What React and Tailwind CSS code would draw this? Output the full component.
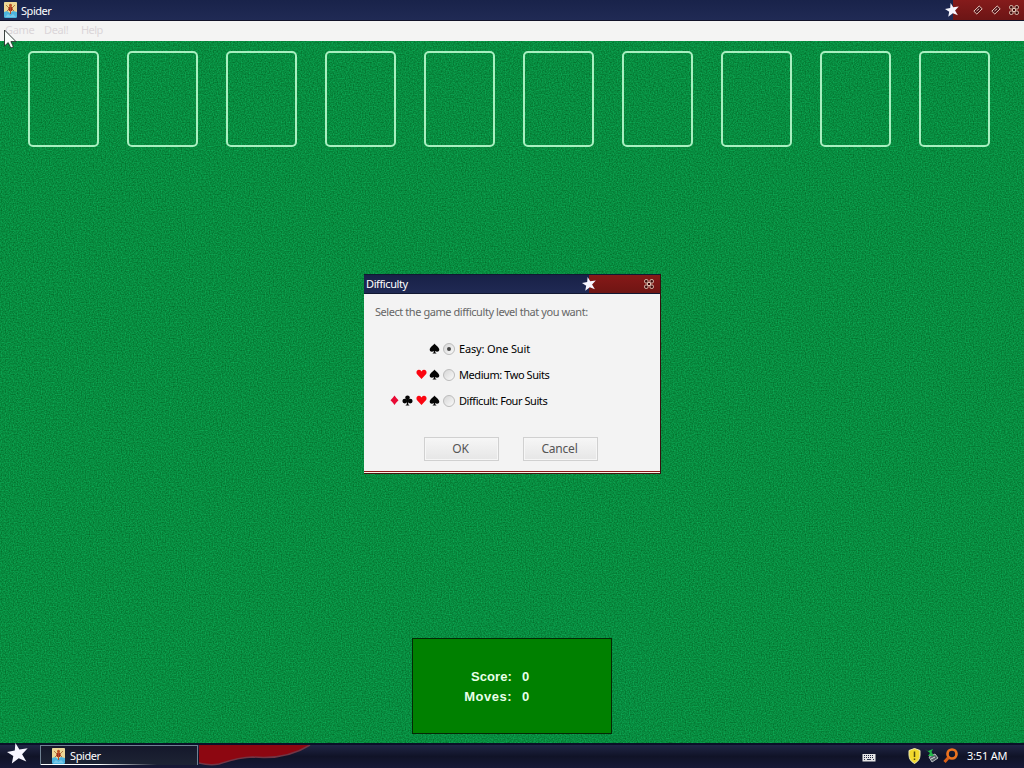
const suitPaths = {
  spade: 'M5.5 .5 C6.3 2.3 10.3 4 10.3 6.8 C10.3 8.7 7.8 9.4 6.2 8 L6.2 9.3 L7.6 10.5 H3.4 L4.8 9.3 L4.8 8 C3.2 9.4 .7 8.7 .7 6.8 C.7 4 4.7 2.3 5.5 .5Z',
  heart: 'M5.5 10 L1.1 5.3 C-.5 3 1.2 .5 3.2 .8 Q4.8 1 5.5 2.4 Q6.2 1 7.8 .8 C9.8 .5 11.5 3 9.9 5.3Z',
  diamond: 'M5.5 .5 Q7.2 3 9.5 5.2 Q7.2 7.4 5.5 10 Q3.8 7.4 1.5 5.2 Q3.8 3 5.5 .5Z',
};

const suitColors = { spade: '#050505', club: '#050505', heart: '#fb0510', diamond: '#e80a35' };

const Suit = ({ name }) => (
  <svg width="11" height="11" viewBox="0 0 11 11" fill={suitColors[name]}>
    {name === 'club' ? (
      <>
        <circle cx="5.5" cy="2.7" r="2.3" />
        <circle cx="2.8" cy="6.1" r="2.4" />
        <circle cx="8.2" cy="6.1" r="2.4" />
        <path d="M4.8 4h1.4v5.3L7.6 10.5H3.4l1.4-1.2Z" />
      </>
    ) : (
      <path d={suitPaths[name]} />
    )}
  </svg>
);

const Star = ({ className }) => (
  <svg viewBox="0 0 20 20" className={className}>
    <path d="M8 0 L11.8 6.2 L19.7 5 L14.4 10.8 L18.4 17.6 L11.2 14.6 L4.6 19.6 L6 12.4 L0 8.6 L7.4 7.2Z" fill="#f7f6ff" />
  </svg>
);

const SpiderIcon = ({ className }) => (
  <svg viewBox="0 0 13 16" className={className}>
    <rect width="13" height="16" rx="1.5" fill="#4cb5df" />
    <path d="M1 0H12Q13 0 13 1V10L9 9 6 11 3 9 0 10V1Q0 0 1 0Z" fill="#edd796" />
    <path d="M1 15L4 12L6.5 14L9 12L12 15Z" fill="#78c9e8" />
    <path d="M2 3L5 6M11 3L8 6M3 9L5 7M10 9L8 7" stroke="#a5602a" fill="none" strokeWidth=".8" />
    <ellipse cx="6.5" cy="3.5" rx="1.5" ry="1.8" fill="#c05318" />
    <ellipse cx="6.5" cy="7" rx="2.2" ry="2.3" fill="#a52b19" />
    <path d="M6.5 2V12" stroke="#b5502c" />
  </svg>
);

const DiamondButton = () => (
  <svg width="10" height="10" viewBox="0 0 10 10" fill="none" stroke="#e8c9bd" strokeWidth="1">
    <path d="M.8 6.2 6.2 1 9.2 3.8 3.8 9Z" fill="#4a0b12" />
    <path d="M3.5 6 6.2 3.7" />
  </svg>
);

const CloseIcon = () => (
  <svg width="10" height="10" viewBox="0 0 10 10" fill="#3a0808" stroke="#efd6c6" strokeWidth=".9">
    <rect x=".6" y=".6" width="3.4" height="3.4" rx="1.2" />
    <rect x="6" y=".6" width="3.4" height="3.4" rx="1.2" />
    <rect x=".6" y="6" width="3.4" height="3.4" rx="1.2" />
    <rect x="6" y="6" width="3.4" height="3.4" rx="1.2" />
    <path d="M5 3 7 5 5 7 3 5Z" />
  </svg>
);

const Felt = () => (
  <svg className="absolute inset-0" width="1024" height="702">
    <defs>
      <filter id="felt" x="0" y="0" width="100%" height="100%" colorInterpolationFilters="sRGB">
        <feTurbulence type="fractalNoise" baseFrequency="0.75" numOctaves="1" seed="8" />
        <feColorMatrix values="0.06 0 0 0 0  0.36 0 0 0 0.37  0.26 0 0 0 0.12  0 0 0 0 1" />
      </filter>
    </defs>
    <rect width="1024" height="702" fill="#058b3d" filter="url(#felt)" />
  </svg>
);

const levels = [
  { label: 'Easy: One Suit', suits: ['spade'], checked: true, spacing: 'tracking-[-0.15px]' },
  { label: 'Medium: Two Suits', suits: ['heart', 'spade'], spacing: 'tracking-[-0.43px]' },
  { label: 'Difficult: Four Suits', suits: ['diamond', 'club', 'heart', 'spade'], spacing: 'tracking-[-0.44px]' },
];

const DifficultyDialog = () => (
  <div className="absolute left-[364px] top-[233px] flex h-[200px] w-[297px] flex-col border-r border-[#35100d] bg-[#f3f3f3]">
    <div className="flex h-5 shrink-0 border-y border-[#111832] bg-linear-to-b from-[#182147] to-[#202a54] text-white">
      <span className="w-[218px] pl-[2px] text-[11px] leading-[18px] tracking-[-0.4px]">Difficulty</span>
      <div className="relative ml-[7px] flex flex-1 items-center justify-end bg-linear-to-b from-[#861918] to-[#6f1513] pl-2 pr-[6px]">
        <Star className="absolute -left-[7px] top-[2px] h-[14px] w-[14px]" />
        <CloseIcon />
      </div>
    </div>
    <p className="mt-[10px] pl-[11px] text-[11px] leading-4 tracking-[-0.44px] text-[#666] whitespace-nowrap">
      Select the game difficulty level that you want:
    </p>
    <div className="mt-[16px] flex flex-col">
      {levels.map((level) => (
        <label key={level.label} className="flex h-[26px] items-center">
          <span className="flex w-[76px] justify-end gap-[2.5px] pb-[2px]">
            {level.suits.map((suit) => <Suit key={suit} name={suit} />)}
          </span>
          <span className="ml-[3px] flex h-3 w-3 items-center justify-center rounded-full border border-[#bcbcbc] bg-linear-to-br from-[#d6d6d6] to-[#fafafa]">
            {level.checked && <span className="h-1 w-1 rounded-full bg-[#444]" />}
          </span>
          <span className={`ml-1 text-[11px] text-black whitespace-nowrap ${level.spacing}`}>{level.label}</span>
        </label>
      ))}
    </div>
    <div className="mt-[23px] flex gap-6 pl-[60px]">
      <button className="h-6 w-[75px] border border-[#d0d0d0] bg-linear-to-b from-[#f6f6f6] to-[#e6e6e6] pr-[2px] text-[12px] tracking-[-0.2px] text-[#555] shadow-[inset_0_0_0_1px_#f6f6f6]">OK</button>
      <button className="h-6 w-[75px] border border-[#d0d0d0] bg-linear-to-b from-[#f6f6f6] to-[#e6e6e6] pr-[2px] text-[12px] tracking-[-0.2px] text-[#555] shadow-[inset_0_0_0_1px_#f6f6f6]">Cancel</button>
    </div>
    <div className="mt-auto flex flex-col">
      <div className="h-px bg-[#8a1918]" />
      <div className="h-px bg-[#f8f0e5]" />
      <div className="h-px bg-[#42150f]" />
    </div>
  </div>
);

const TitleBar = () => (
  <header className="flex h-[21px] border-b border-[#111329] bg-linear-to-b from-[#19234a] to-[#202a54] text-white">
    <div className="flex w-[953px] items-center">
      <SpiderIcon className="mb-px ml-1 h-4 w-[13px]" />
      <span className="ml-1 pt-[2px] text-[11px] tracking-[-0.45px]">Spider</span>
    </div>
    <div className="relative flex flex-1 items-center justify-end gap-2 bg-linear-to-b from-[#851b1b] to-[#6c1515] pr-[5px]">
      <Star className="absolute -left-[8px] top-[3px] h-[14px] w-[14px]" />
      <DiamondButton />
      <DiamondButton />
      <CloseIcon />
    </div>
  </header>
);

const Taskbar = () => (
  <footer className="flex h-[25px] border-t-2 border-[#0a1028] bg-linear-to-b from-[#202545] via-[#101327] to-[#171a38] text-white">
    <div className="w-10 pl-[7px]">
      <Star className="-mt-[2px] h-[21px] w-[21px]" />
    </div>
    <div className="flex h-[20px] w-[158px] flex-col border-l border-r border-t border-[#6f8192] bg-linear-to-b from-[#15182b] to-[#1d2434]">
      <div className="flex h-[18px] items-center pl-[11px]">
        <SpiderIcon className="mt-px h-4 w-[13px]" />
        <span className="ml-[5px] pt-[3px] text-[11px] tracking-[-0.4px]">Spider</span>
      </div>
      <div className="h-px w-[116px] bg-linear-to-r from-white via-white to-transparent" />
    </div>
    <svg width="118" height="23" viewBox="0 0 118 23">
      <path d="M1 0H112Q88 15 55 12Q42 12 21 19Q12 21 1 18Z" fill="#8d0711" />
      <path d="M1 18Q12 21 21 19Q42 12 55 12Q88 15 112 0" fill="none" stroke="#733544" strokeWidth="1.5" />
    </svg>
    <div className="ml-auto flex items-start pr-[16px]">
      <svg className="mt-[8px]" width="14" height="9" viewBox="0 0 14 9">
        <rect x=".5" y="1" width="13" height="7.5" fill="#e5e5e5" />
        <path d="M2 2.5H12M2 4.5H12" stroke="#252943" strokeDasharray="1 1" />
        <path d="M2 6.5H3M5 6.5H9M11 6.5H12" stroke="#30344d" />
      </svg>
      <svg className="ml-8 mt-[3px]" width="13" height="16" viewBox="0 0 13 16">
        <path d="M6.5 .5 12 2.5V7Q12 12.5 6.5 15.5Q1 12.5 1 7V2.5Z" fill="#f2d92d" stroke="#f1eeb4" />
        <path d="M6.5 3.5V9M6.5 10.5V12" stroke="#544b0c" strokeWidth="1.5" />
      </svg>
      <svg className="ml-[4px] mt-[3px]" width="14" height="15" viewBox="0 0 14 15">
        <path d="M4 9 10 6 13 10 7 14Z" fill="#596068" stroke="#b8bebf" />
        <path d="M6 11 10 9" stroke="#d9dddf" />
        <path d="M0 1 3 3 8 1 6.5 4 9 8 3 8 5 5Z" fill="#20b84a" />
      </svg>
      <svg className="ml-[4px] mt-[3px]" width="15" height="16" viewBox="0 0 15 16" fill="none">
        <circle cx="9" cy="6" r="4.5" stroke="#ed731f" strokeWidth="2.7" />
        <path d="M5.5 9.5 1.5 14" stroke="#dc6118" strokeWidth="3" />
      </svg>
      <span className="ml-[9px] mt-[3px] w-[41px] text-[11px] leading-4 tracking-[-0.2px] whitespace-nowrap">3:51 AM</span>
    </div>
  </footer>
);

export default function App() {
  return (
    <div className="relative flex h-[768px] w-[1024px] flex-col overflow-hidden font-['Noto_Sans',sans-serif]">
      <TitleBar />
      <nav className="flex h-5 gap-3 bg-[#f4f4f3] pl-[5px] text-[11px] leading-[18px] tracking-[-0.6px] text-[#dbd6d9]">
        <span className="w-[27px] tracking-[-0.3px]">Game</span>
        <span className="w-[25px] tracking-[-0.4px]">Deal!</span>
        <span>Help</span>
      </nav>
      <main className="relative flex flex-1 flex-col bg-[#058b3d]">
        <Felt />
        <div className="relative flex gap-7 pl-7 pt-[10px]">
          {Array.from({ length: 10 }, (_, i) => (
            <div key={i} className="h-24 w-[71px] rounded-[5px] border-2 border-[#a9efc0]" />
          ))}
        </div>
        <section className="relative mx-auto mb-[9px] mt-auto h-24 w-[200px] border border-[#052805] bg-[#008000] pt-[28px] font-['Liberation_Sans',sans-serif] text-[13px] font-bold leading-5 text-[#e9ffe9]">
          <p className="flex"><span className="w-[99px] text-right tracking-[0.1px]">Score:</span><span className="ml-[10px]">0</span></p>
          <p className="flex"><span className="w-[99px] text-right tracking-[0.5px]">Moves:</span><span className="ml-[10px]">0</span></p>
        </section>
        <DifficultyDialog />
      </main>
      <Taskbar />
      {/* Mouse pointer */}
      <svg className="absolute left-[4px] top-[29px]" width="13" height="20" viewBox="0 0 13 20">
        <path d="M.5 1V17L4.2 13.6 6.8 19 9.4 17.8 6.9 12.6H12Z" fill="#fbfffc" stroke="#26302b" strokeWidth=".9" />
      </svg>
    </div>
  );
}
